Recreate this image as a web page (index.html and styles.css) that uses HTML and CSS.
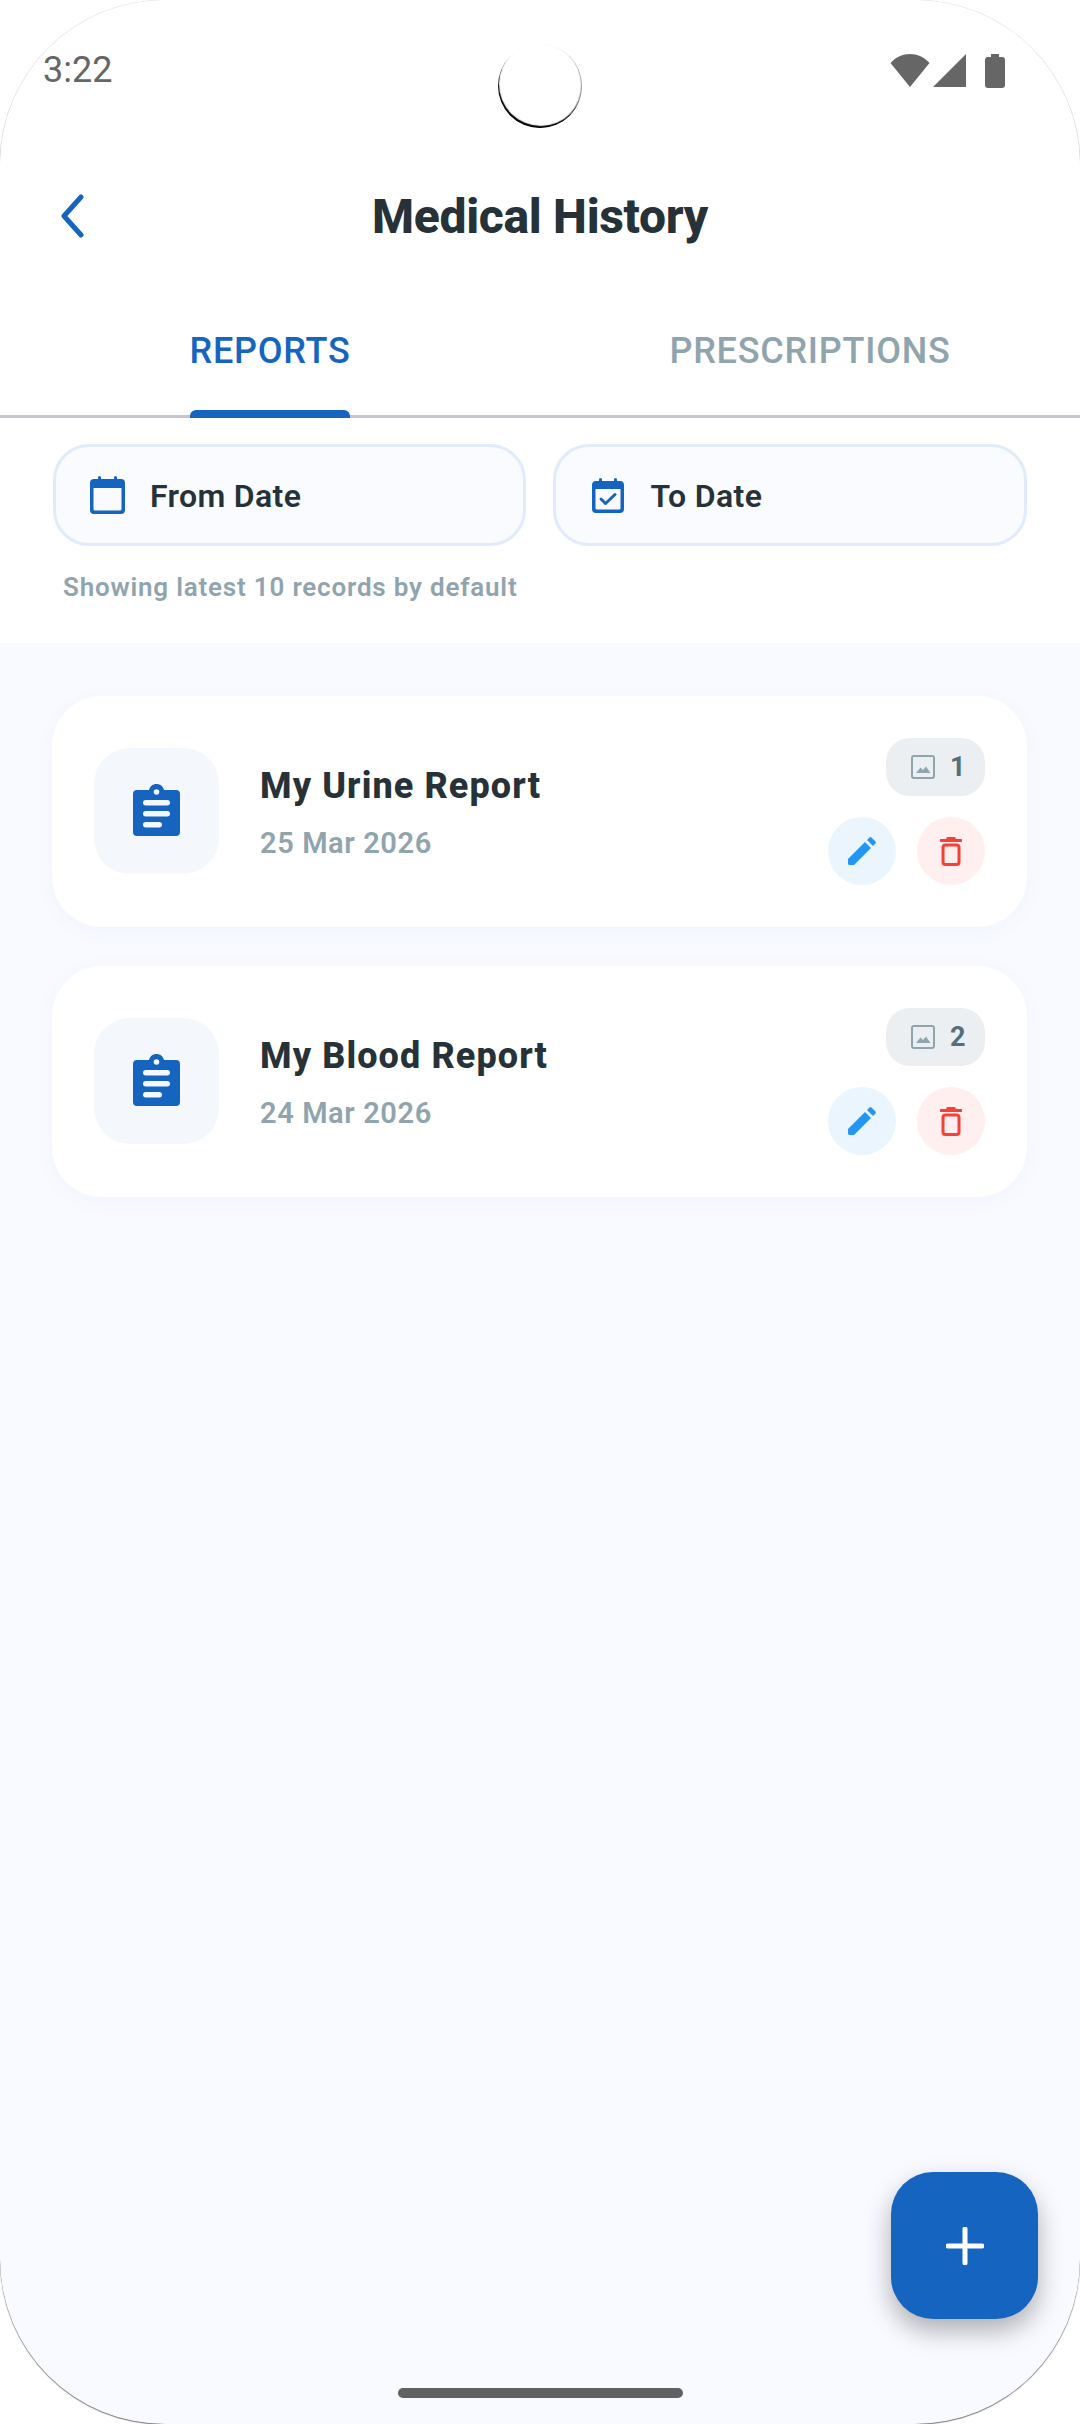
FILE: index.html
```html
<!DOCTYPE html>
<html lang="en">
  <head>
    <meta charset="UTF-8" />
    <meta name="viewport" content="width=device-width, initial-scale=1.0" />
    <title>Medical History</title>
    <link rel="stylesheet" href="styles.css">
  </head>
  <body>
    <div class="screen">
      <div class="status-bar">
        <span class="time">3:22</span>
        <div class="status-icons">
          <svg width="40" height="33" viewBox="0 0 40 33"><path d="M0.500 9 C11 -3 29 -3 39.500 9 L20 33 Z" fill="#666"/></svg>
          <svg width="33" height="33" viewBox="0 0 33 33"><path d="M33 0 V33 H0 Z" fill="#666"/></svg>
          <svg width="20" height="34" viewBox="0 0 20 34"><path d="M6 0 H14 V3 H17 A3 3 0 0 1 20 6 V31 A3 3 0 0 1 17 34 H3 A3 3 0 0 1 0 31 V6 A3 3 0 0 1 3 3 H6 Z" fill="#666"/></svg>
        </div>
      </div>
      <div class="camera"></div>

      <header class="app-bar">
        <svg class="back" width="24" height="44" viewBox="0 0 24 44"><path d="M21 3 L4 22 L21 41" fill="none" stroke="#1565c0" stroke-width="5" stroke-linecap="round" stroke-linejoin="round"/></svg>
        <h1>Medical History</h1>
      </header>

      <nav class="tabs">
        <div class="tab active"><span>REPORTS</span></div>
        <div class="tab"><span>PRESCRIPTIONS</span></div>
      </nav>

      <section class="filters">
        <div class="date-row">
          <div class="date-btn">
            <svg width="35" height="38" viewBox="0 0 35 38"><path d="M8 3 V1.500 A1.500 1.500 0 0 1 11 1.500 V3 H24 V1.500 A1.500 1.500 0 0 1 27 1.500 V3 H31 A4 4 0 0 1 35 7 V34 A4 4 0 0 1 31 38 H4 A4 4 0 0 1 0 34 V7 A4 4 0 0 1 4 3 Z M3.500 12 V33 A1.500 1.500 0 0 0 5 34.500 H30 A1.500 1.500 0 0 0 31.500 33 V12 Z" fill="#1565c0" fill-rule="evenodd"/></svg>
            <span>From Date</span>
          </div>
          <div class="date-btn date-to">
            <svg width="32" height="35" viewBox="0 0 32 35"><path d="M7 3 V1.500 A1.500 1.500 0 0 1 10 1.500 V3 H22 V1.500 A1.500 1.500 0 0 1 25 1.500 V3 H28 A4 4 0 0 1 32 7 V31 A4 4 0 0 1 28 35 H4 A4 4 0 0 1 0 31 V7 A4 4 0 0 1 4 3 Z M3.500 11 V30 A1.500 1.500 0 0 0 5 31.500 H27 A1.500 1.500 0 0 0 28.500 30 V11 Z" fill="#1565c0" fill-rule="evenodd"/><path d="M9 21 L13.500 25.500 L23 16.500" fill="none" stroke="#1565c0" stroke-width="3" stroke-linecap="round" stroke-linejoin="round"/></svg>
            <span>To Date</span>
          </div>
        </div>
        <p class="hint">Showing latest 10 records by default</p>
      </section>

      <main class="list">
        <article class="card">
          <div class="doc-icon">
            <svg width="47" height="52" viewBox="0 0 47 52"><path d="M4 6 H16 C17 2 20 0 23.500 0 C27 0 30 2 31 6 H43 A4 4 0 0 1 47 10 V48 A4 4 0 0 1 43 52 H4 A4 4 0 0 1 0 48 V10 A4 4 0 0 1 4 6 Z" fill="#1565c0"/><circle cx="23.500" cy="8" r="2.800" fill="#f4f7fc"/><rect x="10" y="16" width="27" height="5.500" rx="2.750" fill="#f4f7fc"/><rect x="10" y="27" width="27" height="5.500" rx="2.750" fill="#f4f7fc"/><rect x="10" y="38" width="19" height="5.500" rx="2.750" fill="#f4f7fc"/></svg>
          </div>
          <div class="card-text">
            <h2>My Urine Report</h2>
            <p>25 Mar 2026</p>
          </div>
          <div class="card-side">
            <div class="badge">
              <svg width="24" height="24" viewBox="0 0 24 24"><rect x="1" y="1" width="22" height="22" rx="2" fill="none" stroke="#90a4ae" stroke-width="2"/><path d="M5 18 L9.500 12.500 L12 15 L15 11.500 L19.500 18 Z" fill="#90a4ae"/></svg>
              <span>1</span>
            </div>
            <div class="actions">
              <div class="round edit">
                <svg width="28" height="28" viewBox="0 0 28 28"><path d="M0 22 L17 5 L23 11 L6 28 H1.500 A1.500 1.500 0 0 1 0 26.500 Z M19 3 L21.500 0.500 A1.500 1.500 0 0 1 23.500 0.500 L27.500 4.500 A1.500 1.500 0 0 1 27.500 6.500 L25 9 Z" fill="#2196f3"/></svg>
              </div>
              <div class="round del">
                <svg width="22" height="29" viewBox="0 0 22 29"><path d="M7 0 H15 L16 2 H21 A1 1 0 0 1 21 5 H1 A1 1 0 0 1 1 2 H6 Z" fill="#f44336"/><rect x="3" y="8" width="16" height="19.500" rx="2.500" fill="none" stroke="#f44336" stroke-width="3"/></svg>
              </div>
            </div>
          </div>
        </article>

        <article class="card">
          <div class="doc-icon">
            <svg width="47" height="52" viewBox="0 0 47 52"><path d="M4 6 H16 C17 2 20 0 23.500 0 C27 0 30 2 31 6 H43 A4 4 0 0 1 47 10 V48 A4 4 0 0 1 43 52 H4 A4 4 0 0 1 0 48 V10 A4 4 0 0 1 4 6 Z" fill="#1565c0"/><circle cx="23.500" cy="8" r="2.800" fill="#f4f7fc"/><rect x="10" y="16" width="27" height="5.500" rx="2.750" fill="#f4f7fc"/><rect x="10" y="27" width="27" height="5.500" rx="2.750" fill="#f4f7fc"/><rect x="10" y="38" width="19" height="5.500" rx="2.750" fill="#f4f7fc"/></svg>
          </div>
          <div class="card-text">
            <h2>My Blood Report</h2>
            <p>24 Mar 2026</p>
          </div>
          <div class="card-side">
            <div class="badge">
              <svg width="24" height="24" viewBox="0 0 24 24"><rect x="1" y="1" width="22" height="22" rx="2" fill="none" stroke="#90a4ae" stroke-width="2"/><path d="M5 18 L9.500 12.500 L12 15 L15 11.500 L19.500 18 Z" fill="#90a4ae"/></svg>
              <span>2</span>
            </div>
            <div class="actions">
              <div class="round edit">
                <svg width="28" height="28" viewBox="0 0 28 28"><path d="M0 22 L17 5 L23 11 L6 28 H1.500 A1.500 1.500 0 0 1 0 26.500 Z M19 3 L21.500 0.500 A1.500 1.500 0 0 1 23.500 0.500 L27.500 4.500 A1.500 1.500 0 0 1 27.500 6.500 L25 9 Z" fill="#2196f3"/></svg>
              </div>
              <div class="round del">
                <svg width="22" height="29" viewBox="0 0 22 29"><path d="M7 0 H15 L16 2 H21 A1 1 0 0 1 21 5 H1 A1 1 0 0 1 1 2 H6 Z" fill="#f44336"/><rect x="3" y="8" width="16" height="19.500" rx="2.500" fill="none" stroke="#f44336" stroke-width="3"/></svg>
              </div>
            </div>
          </div>
        </article>
      </main>

      <div class="fab">
        <svg width="38" height="38" viewBox="0 0 38 38"><path d="M19 2 V36 M2 19 H36" stroke="#fff" stroke-width="5" stroke-linecap="round"/></svg>
      </div>
      <div class="home-bar"></div>
    </div>
  </body>
</html>
```

FILE: styles.css
```css
html,
body {
  margin: 0;
  padding: 0;
  background: #fff;
}
body {
  font-family: Roboto, "Liberation Sans", sans-serif;
  width: 1080px;
  height: 2424px;
  overflow: hidden;
}
h1,
h2,
p {
  margin: 0;
}
.screen {
  position: relative;
  width: 1080px;
  height: 2424px;
  border-radius: 165px;
  background: #f9faff;
  box-shadow: 0 1px 1px rgba(0, 0, 0, 0.5), 0 0 1px rgba(0, 0, 0, 0.4);
  display: flex;
  flex-direction: column;
  overflow: hidden;
}
.status-bar {
  height: 150px;
  padding: 48px 75px 0 43px;
  box-sizing: border-box;
  display: flex;
  justify-content: space-between;
  align-items: flex-start;
  background: #fff;
}
.time {
  font-size: 36px;
  line-height: 44px;
  color: #666;
}
.status-icons {
  display: flex;
  align-items: flex-start;
  gap: 3px;
  padding-top: 6px;
}
.status-icons svg:last-child {
  margin-left: 16px;
}
.camera {
  position: absolute;
  left: 498px;
  top: 44px;
  width: 84px;
  height: 84px;
  border-radius: 50%;
  background: #fff;
  box-shadow: inset 1px -2px 1px #000, inset -1px -1px 1px rgba(0, 0, 0, 0.4);
}
.app-bar {
  height: 132px;
  background: #fff;
  display: flex;
  align-items: center;
  justify-content: center;
  position: relative;
}
.back {
  position: absolute;
  left: 60px;
  top: 44px;
}
.app-bar h1 {
  font-size: 48px;
  font-weight: 800;
  letter-spacing: -0.3px;
  color: #263238;
}
.tabs {
  height: 133px;
  background: #fff;
  display: flex;
  border-bottom: 3px solid #cac4d0;
}
.tab {
  flex: 1;
  display: flex;
  justify-content: center;
  font-size: 36px;
  font-weight: 500;
  letter-spacing: 0.75px;
  color: #90a4ae;
}
.tab span {
  height: 133px;
  line-height: 138px;
  position: relative;
}
.tab.active {
  color: #1565c0;
}
.tab.active span::after {
  content: "";
  position: absolute;
  left: 0;
  right: 0;
  bottom: -3px;
  height: 8px;
  background: #1565c0;
  border-radius: 6px 6px 0 0;
}
.filters {
  background: #fff;
  padding: 26px 53px 0;
  height: 225px;
  box-sizing: border-box;
}
.date-row {
  display: flex;
  gap: 27px;
}
.date-btn {
  flex: 1;
  height: 102px;
  box-sizing: border-box;
  border: 3px solid #e0ecfb;
  border-radius: 36px;
  background: #f9fbff;
  display: flex;
  align-items: center;
  gap: 25px;
  padding-left: 34px;
  font-size: 32px;
  font-weight: 600;
  letter-spacing: 0.35px;
  color: #263238;
}
.date-btn span {
  padding-top: 2px;
}
.date-to {
  padding-left: 36px;
  gap: 27px;
}
.hint {
  margin: 26px 0 0 10px;
  font-size: 26px;
  font-weight: 600;
  letter-spacing: 0.8px;
  line-height: 30px;
  color: #90a4ae;
}
.list {
  padding: 53px 53px 0 52px;
  display: flex;
  flex-direction: column;
  gap: 39px;
}
.card {
  height: 231px;
  box-sizing: border-box;
  background: #fff;
  border-radius: 50px;
  box-shadow: 0 4px 20px rgba(21, 101, 192, 0.04);
  display: flex;
  align-items: center;
  padding: 0 42px;
}
.doc-icon {
  width: 125px;
  height: 126px;
  border-radius: 36px;
  background: #f4f7fc;
  display: flex;
  align-items: center;
  justify-content: center;
  margin: 0 41px 2px 0;
}
.doc-icon svg {
  margin-bottom: 2px;
}
.card-text {
  flex: 1;
  padding-top: 2px;
}
.card-text h2 {
  font-size: 36px;
  font-weight: 800;
  letter-spacing: 1.1px;
  line-height: 44px;
  color: #263238;
}
.card-text p {
  margin-top: 17px;
  font-size: 29px;
  font-weight: 600;
  letter-spacing: 0.6px;
  line-height: 36px;
  color: #90a4ae;
}
.card-side {
  display: flex;
  flex-direction: column;
  align-items: flex-end;
  gap: 21px;
}
.badge {
  width: 99px;
  height: 58px;
  box-sizing: border-box;
  border-radius: 24px;
  background: #eceff1;
  display: flex;
  align-items: center;
  gap: 15px;
  padding-left: 25px;
  font-size: 27px;
  font-weight: 700;
  color: #546e7a;
}
.actions {
  display: flex;
  gap: 21px;
}
.round {
  width: 68px;
  height: 68px;
  border-radius: 50%;
  display: flex;
  align-items: center;
  justify-content: center;
}
.edit {
  background: #ebf5fe;
}
.del {
  background: #ffefee;
}
.fab {
  position: absolute;
  left: 891px;
  top: 2172px;
  width: 147px;
  height: 147px;
  border-radius: 42px;
  background: #1565c0;
  box-shadow: 0 12px 26px rgba(0, 0, 0, 0.3);
  display: flex;
  align-items: center;
  justify-content: center;
}
.home-bar {
  position: absolute;
  left: 398px;
  top: 2388px;
  width: 285px;
  height: 10px;
  border-radius: 5px;
  background: #5f6163;
}
```
